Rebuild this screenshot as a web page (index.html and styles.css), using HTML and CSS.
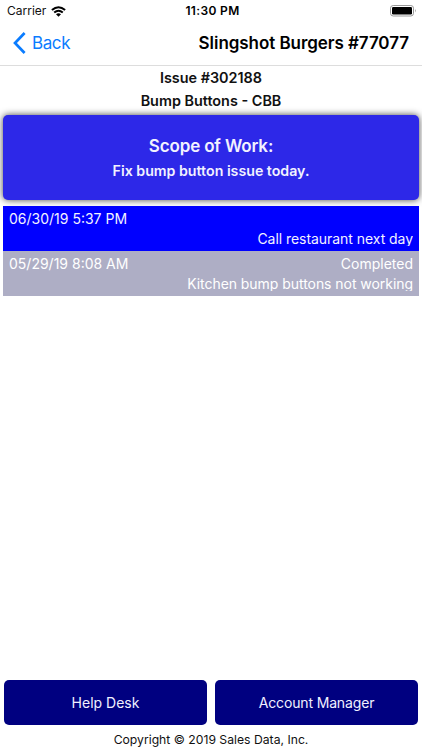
FILE: index.html
```html
<!DOCTYPE html>
<html lang="en">
<head>
<meta charset="utf-8">
<title>Issue #302188</title>
<link rel="stylesheet" href="styles.css">
</head>
<body>
<div class="app">
  <div class="status">
    <div class="carrier"><span>Carrier</span>
      <svg width="15" height="11" viewBox="0 0 15 11" fill="none" stroke="#000" stroke-width="2"><path d="M.9 4.1Q7.5-1.7 14.1 4.1"/><path d="M3.2 6.6Q7.5 2.9 11.8 6.6"/><path d="M5 8.3Q7.5 6.2 10 8.3L7.5 10.8Z" fill="#000" stroke="none"/></svg>
    </div>
    <time class="clock">11:30 PM</time>
    <svg class="battery" width="27" height="12" viewBox="0 0 27 12"><rect x=".5" y=".5" width="23" height="10.5" rx="2.7" fill="#fff" stroke="#999"/><rect x="2" y="2" width="20" height="7.5" rx="1.2"/><path d="M25 4Q26.5 5.8 25 7.6Z" fill="#888"/></svg>
  </div>
  <header class="nav">
    <a class="back"><svg width="13" height="22" viewBox="0 0 13 22" fill="none" stroke="#0a7cff" stroke-width="2.7"><path d="M11.6 1L2 11L11.6 21"/></svg><span>Back</span></a>
    <h1>Slingshot Burgers #77077</h1>
  </header>
  <section class="issue">
    <div>Issue #302188</div>
    <div>Bump Buttons - CBB</div>
  </section>
  <section class="scope">
    <h2>Scope of Work:</h2>
    <p>Fix bump button issue today.</p>
  </section>
  <ul class="log">
    <li class="entry open">
      <div class="meta"><span>06/30/19 5:37 PM</span></div>
      <div class="note">Call restaurant next day</div>
    </li>
    <li class="entry done">
      <div class="meta"><span>05/29/19 8:08 AM</span><span>Completed</span></div>
      <div class="note">Kitchen bump buttons not working</div>
    </li>
  </ul>
  <footer>
    <div class="actions"><button>Help Desk</button><button class="manager">Account Manager</button></div>
    <div class="copyright">Copyright © 2019 Sales Data, Inc.</div>
  </footer>
</div>
</body>
</html>
```
FILE: styles.css
```css
* { box-sizing: border-box; }
body { margin: 0; background: #fff; font-family: Inter, sans-serif; color: #111; }
h1, h2, p, ul { margin: 0; padding: 0; }
.app { height: 750px; display: flex; flex-direction: column; overflow: hidden; }
.status { height: 21px; flex: none; display: grid; grid-template-columns: 1fr auto 1fr; align-items: center; padding: 0 5px 0 7px; font-size: 12px; line-height: 22px; }
.carrier { display: flex; align-items: center; gap: 5px; }
.clock { font-weight: 600; color: #000; letter-spacing: .35px; padding-left: 1px; }
.battery { justify-self: end; }
.nav { height: 45px; flex: none; border-bottom: 1px solid #ddd; display: flex; align-items: center; justify-content: space-between; padding: 0 13px; }
.back { display: flex; align-items: center; gap: 6px; color: #0a7cff; font-size: 17px; letter-spacing: -.4px; }
h1 { font-size: 17px; line-height: 22px; font-weight: 600; color: #000; letter-spacing: -.06px; }
.issue { text-align: center; font-size: 14.4px; line-height: 23px; font-weight: 600; height: 49px; flex: none; }
.scope { height: 85px; flex: none; margin: 0 3px; padding-top: 19px; text-align: center; color: #f2f2ff; background: #2d28e8; border-radius: 5px; box-shadow: 0 0 7px #000b; }
h2 { font-size: 17px; line-height: 25px; font-weight: 600; letter-spacing: -.15px; }
.scope p { font-size: 14.2px; line-height: 24px; font-weight: 600; }
.log { list-style: none; margin: 6px 3px 0; }
.entry { height: 45px; padding: 3px 6px 5px; color: #f2f2ff; font-size: 14px; }
.open { background: #00f; }
.done { background: #aeaec5; color: #fff; }
.meta { display: flex; justify-content: space-between; height: 20px; line-height: 20px; }
.note { height: 17px; line-height: 20px; text-align: right; overflow: hidden; letter-spacing: -.05px; }
footer { margin-top: auto; }
.actions { display: grid; grid-template-columns: 203px 203px; gap: 8px; padding-left: 4px; }
button { height: 45px; border: 0; border-radius: 5px; background: #000080; color: #f0f0ff; font: 14px Inter, sans-serif; padding: 0; }
.manager { letter-spacing: -.15px; }
.copyright { height: 25px; line-height: 29px; font-size: 12.2px; text-align: center; }
```
